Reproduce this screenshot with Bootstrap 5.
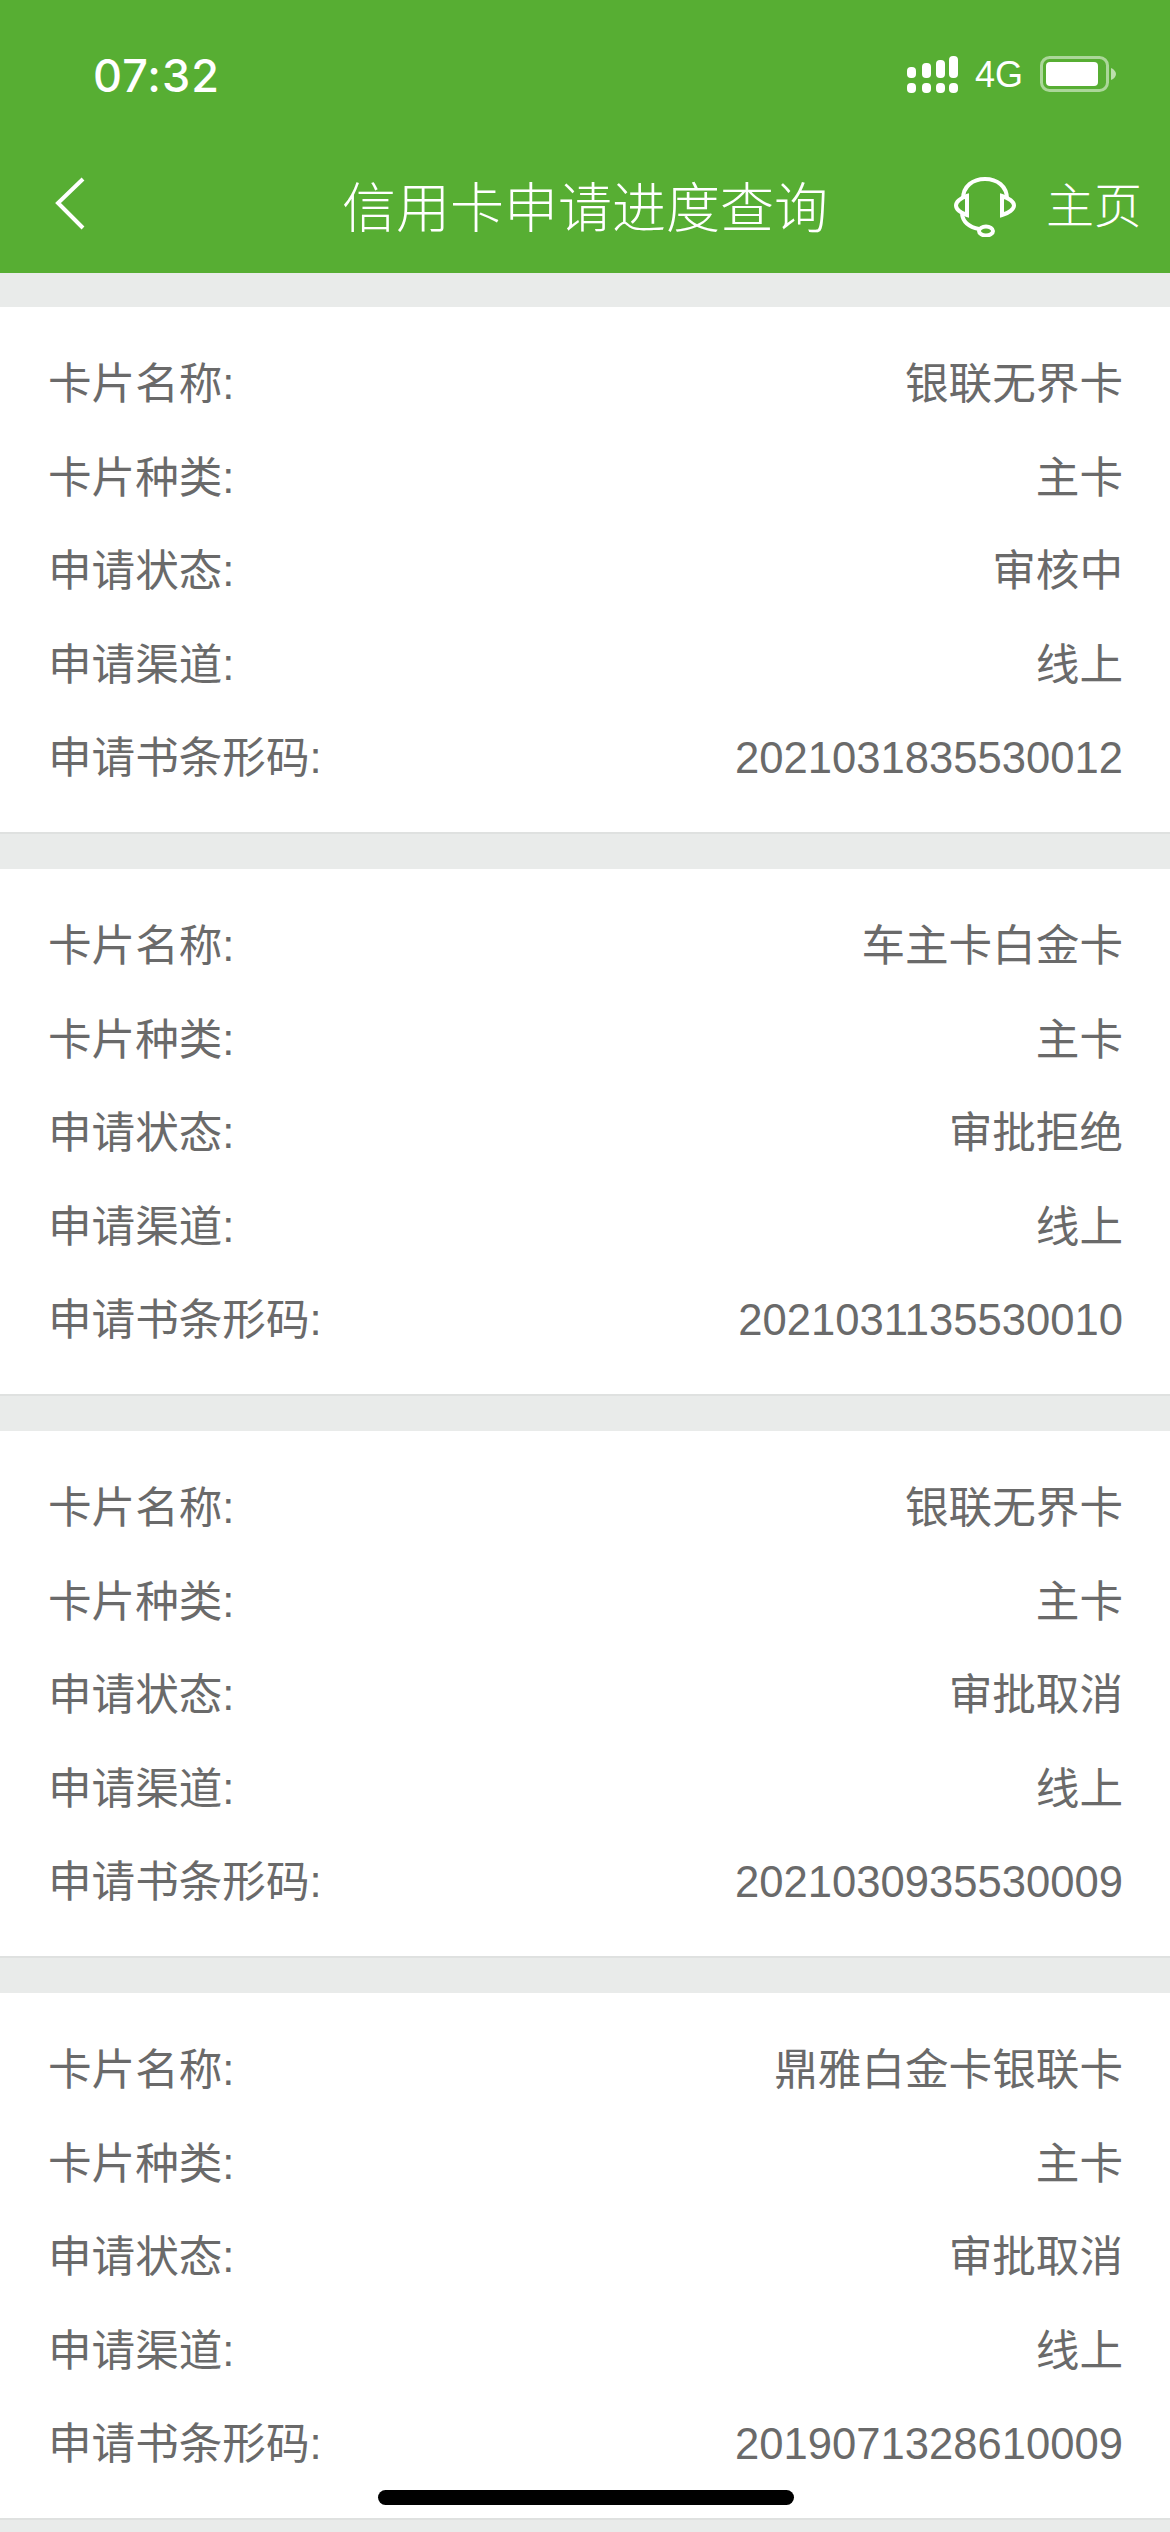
<!DOCTYPE html>
<html lang="zh">
<head>
<meta charset="utf-8">
<title>信用卡申请进度查询</title>
<link href="https://cdn.jsdelivr.net/npm/bootstrap@5.3.0/dist/css/bootstrap.min.css" rel="stylesheet">
<style>
html,body{height:2532px;overflow:hidden}
body{background:#e9ebea;font-family:"Liberation Sans","Noto Sans CJK SC",sans-serif;color:#6a6a6a}
.app-top{background:#57ae33;height:273px;color:#fff}
.status-line{height:150px;padding:56px 54px 0 93px}
.clock{font:500 45px/1 Inter,"Liberation Sans",sans-serif;letter-spacing:1px;margin-top:-3px}
.net-label{font-size:36px;line-height:1;margin:0 17px 0 16px}
.title-line{height:123px;padding:0 28px 0 52px;position:relative}
.back-mark{margin-top:26px}
.page-title{position:absolute;left:342px;top:24px;font-size:54px;line-height:70px;font-weight:300;white-space:nowrap}
.help-mark{margin-top:27px}
.home-label{font-size:48px;line-height:1;margin:33px 0 0 30px;font-weight:300}
.apply-list{padding-top:34px;gap:35px}
.apply-item{background:#fff;padding:31px 47px 28px 48px;height:527px;border-bottom:2px solid #dfe1e0}
.apply-row{height:93.5px;font-size:43.6px;line-height:93.5px}
.home-bar{position:absolute;left:378px;top:2490px;width:416px;height:15px;background:#000;border-radius:8px}
</style>
</head>
<body>
<div class="position-relative">
<header class="app-top">
  <div class="status-line d-flex justify-content-between align-items-start">
    <div class="clock">07:32</div>
    <div class="d-flex align-items-center">
      <svg width="52" height="38" viewBox="0 0 52 38" fill="#fff"><rect x="0" y="11" width="9" height="11" rx="4"/><rect x="15" y="7" width="9" height="15" rx="4"/><rect x="29" y="4" width="9" height="18" rx="4"/><rect x="42" y="0" width="9" height="22" rx="4"/><rect x="0" y="27" width="9" height="10" rx="4"/><rect x="15" y="27" width="9" height="10" rx="4"/><rect x="29" y="27" width="9" height="10" rx="4"/><rect x="42" y="27" width="9" height="10" rx="4"/></svg>
      <span class="net-label">4G</span>
      <svg width="76" height="38" viewBox="0 0 76 38"><rect x="1.500" y="1.500" width="66" height="33" rx="8" fill="none" stroke="#fff" stroke-opacity=".5" stroke-width="3"/><rect x="6" y="6" width="52" height="24" rx="4" fill="#fff"/><path d="M71 12c3 1 5 4 5 6s-2 5-5 6z" fill="#fff" fill-opacity=".6"/></svg>
    </div>
  </div>
  <div class="title-line d-flex justify-content-between align-items-start">
    <svg class="back-mark" width="36" height="56" viewBox="0 0 36 56" fill="none" stroke="#fff" stroke-width="4"><path d="M31 3 6 27l25 25"/></svg>
    <h1 class="page-title m-0">信用卡申请进度查询</h1>
    <div class="d-flex align-items-start">
      <svg class="help-mark" width="62" height="60" viewBox="0 0 62 60" fill="none" stroke="#fff" stroke-width="4"><path d="M9 22C9 9 19 2 31 2s22 7 22 20"/><path d="M13 19C6 21 2 25 2 28.500S6 36 13 38z"/><path d="M48 19c7 2 12 6 12 9.500S55 36 48 38z"/><path d="M8 37c1 8 7 13 17 15"/><ellipse cx="32" cy="54" rx="7" ry="4.500"/></svg>
      <span class="home-label">主页</span>
    </div>
  </div>
</header>
<main class="apply-list d-flex flex-column">
  <section class="apply-item">
    <div class="apply-row d-flex justify-content-between"><span>卡片名称:</span><span>银联无界卡</span></div>
    <div class="apply-row d-flex justify-content-between"><span>卡片种类:</span><span>主卡</span></div>
    <div class="apply-row d-flex justify-content-between"><span>申请状态:</span><span>审核中</span></div>
    <div class="apply-row d-flex justify-content-between"><span>申请渠道:</span><span>线上</span></div>
    <div class="apply-row d-flex justify-content-between"><span>申请书条形码:</span><span>2021031835530012</span></div>
  </section>
  <section class="apply-item">
    <div class="apply-row d-flex justify-content-between"><span>卡片名称:</span><span>车主卡白金卡</span></div>
    <div class="apply-row d-flex justify-content-between"><span>卡片种类:</span><span>主卡</span></div>
    <div class="apply-row d-flex justify-content-between"><span>申请状态:</span><span>审批拒绝</span></div>
    <div class="apply-row d-flex justify-content-between"><span>申请渠道:</span><span>线上</span></div>
    <div class="apply-row d-flex justify-content-between"><span>申请书条形码:</span><span>2021031135530010</span></div>
  </section>
  <section class="apply-item">
    <div class="apply-row d-flex justify-content-between"><span>卡片名称:</span><span>银联无界卡</span></div>
    <div class="apply-row d-flex justify-content-between"><span>卡片种类:</span><span>主卡</span></div>
    <div class="apply-row d-flex justify-content-between"><span>申请状态:</span><span>审批取消</span></div>
    <div class="apply-row d-flex justify-content-between"><span>申请渠道:</span><span>线上</span></div>
    <div class="apply-row d-flex justify-content-between"><span>申请书条形码:</span><span>2021030935530009</span></div>
  </section>
  <section class="apply-item">
    <div class="apply-row d-flex justify-content-between"><span>卡片名称:</span><span>鼎雅白金卡银联卡</span></div>
    <div class="apply-row d-flex justify-content-between"><span>卡片种类:</span><span>主卡</span></div>
    <div class="apply-row d-flex justify-content-between"><span>申请状态:</span><span>审批取消</span></div>
    <div class="apply-row d-flex justify-content-between"><span>申请渠道:</span><span>线上</span></div>
    <div class="apply-row d-flex justify-content-between"><span>申请书条形码:</span><span>2019071328610009</span></div>
  </section>
</main>
<div class="home-bar"></div>
</div>
<script src="https://cdn.jsdelivr.net/npm/bootstrap@5.3.0/dist/js/bootstrap.bundle.min.js"></script>
</body>
</html>
